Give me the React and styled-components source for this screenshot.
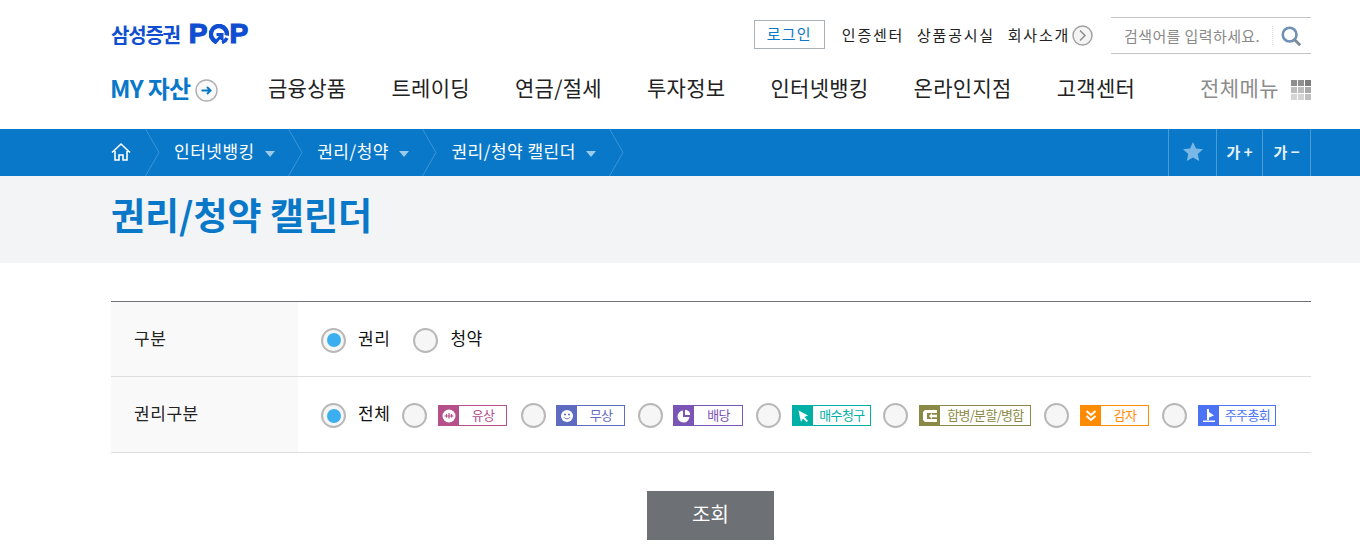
import styled, { createGlobalStyle } from "styled-components";

const GlobalStyle = createGlobalStyle`
  html, body {
    margin: 0;
    padding: 0;
    background: #fff;
    overflow: hidden;
  }
  body, input, button {
    font-family: "Noto Sans CJK KR", "Noto Sans", "Liberation Sans", sans-serif;
  }
  * {
    box-sizing: border-box;
  }
`;

const Page = styled.div`
  width: 1360px;
  height: 557px;
  overflow: hidden;
`;

const Inner = styled.div`
  width: 1200px;
  margin-left: 111px;
`;

const Header = styled.header`
  height: 129px;
`;

const TopRow = styled.div`
  display: flex;
  justify-content: space-between;
  align-items: center;
  height: 71px;
`;

const Logo = styled.a`
  display: flex;
  align-items: center;
  gap: 9px;
  color: #0f4ed1;
  font-weight: 700;
  margin-top: -3px;
`;

const LogoName = styled.span`
  font-size: 20px;
  letter-spacing: -1.2px;
`;

const LogoPop = styled.span`
  display: flex;
  align-items: center;
  gap: 1px;
  font-family: "Liberation Sans", sans-serif;
  font-size: 28px;
  font-weight: 700;
  line-height: 1;
  -webkit-text-stroke: 1.2px #0f4ed1;
`;

const Util = styled.div`
  display: flex;
  align-items: center;
`;

const LoginButton = styled.button`
  width: 71px;
  height: 29px;
  border: 1px solid #a9b0b6;
  background: #fff;
  color: #0a78c8;
  font-size: 15px;
  letter-spacing: 1.2px;
  padding: 0 0 2px;
  margin: -2px 17px 0 0;
`;

const UtilLink = styled.a`
  font-size: 15px;
  color: #222;
  letter-spacing: 1.75px;
  margin: -3px ${(p) => p.$right ?? 13}px 0 0;
  white-space: nowrap;
`;

const MoreIcon = styled.svg`
  margin-top: -1px;
`;

const SearchBox = styled.div`
  display: flex;
  align-items: center;
  width: 200px;
  height: 37px;
  margin-left: 18px;
  border-top: 1px solid #c4c4c4;
  border-bottom: 1px solid #c4c4c4;
  padding-left: 13px;
`;

const SearchText = styled.span`
  font-size: 15px;
  letter-spacing: 0.4px;
  color: #8a8a8a;
  width: 149px;
  white-space: nowrap;
  border-right: 1px dotted #ddd;
  line-height: 19px;
`;

const SearchIcon = styled.svg`
  margin-left: 7px;
`;

const Nav = styled.nav`
  display: flex;
  align-items: center;
  height: 38px;
  margin-top: -3px;
`;

const MyAsset = styled.a`
  display: flex;
  align-items: center;
  width: 157px;
  margin-left: -1px;
  margin-right: 1px;
  color: #0a78c8;
  font-size: 24px;
  font-weight: 700;
  letter-spacing: -0.7px;
  white-space: nowrap;
`;

const MyArrow = styled.svg`
  margin-left: 4px;
  margin-top: 6px;
  flex: none;
`;

const NavList = styled.div`
  display: flex;
  gap: 45px;
  flex: 1;
`;

const NavItem = styled.a`
  font-size: 21px;
  color: #222;
  letter-spacing: 0.3px;
  white-space: nowrap;
`;

const AllMenu = styled.a`
  display: flex;
  align-items: center;
  gap: 12px;
  font-size: 21px;
  color: #8c8c8c;
  letter-spacing: 0.45px;
  white-space: nowrap;
`;

const GridIcon = styled.span`
  display: grid;
  grid-template-columns: repeat(3, 6px);
  grid-auto-rows: 6px;
  gap: 1px;
  margin-top: 5px;
`;

const GridDot = styled.i`
  background: ${(p) => p.$color};
`;

const CrumbBar = styled.div`
  height: 47px;
  background: #0a78c8;
`;

const CrumbInner = styled(Inner)`
  display: flex;
  align-items: center;
  height: 47px;
`;

const Crumbs = styled.div`
  display: flex;
  align-items: center;
  flex: 1;
  height: 47px;
`;

const Crumb = styled.span`
  color: #fff;
  font-size: 17px;
  letter-spacing: 0.5px;
  margin-top: -4px;
  white-space: nowrap;
`;

const Caret = styled.i`
  width: 0;
  height: 0;
  margin: 2px 13px 0 10.5px;
  border-left: 5px solid transparent;
  border-right: 5px solid transparent;
  border-top: 6px solid #9ccbea;
`;

const HomeIcon = styled.svg`
  margin: -2px 14px 0 0;
`;

const Chevron = styled.svg`
  margin-right: 14px;
  flex: none;
`;

const Tools = styled.div`
  display: flex;
  height: 47px;
  border-left: 1px solid #4b9bd7;
`;

const Tool = styled.button`
  display: flex;
  align-items: center;
  justify-content: center;
  width: ${(p) => p.$width}px;
  height: 47px;
  padding: 0 0 2px;
  border: 0;
  border-right: 1px solid #4b9bd7;
  background: transparent;
  color: #e6f2fa;
  font-size: 15px;
  font-weight: 700;
  white-space: nowrap;
`;

const TitleBand = styled.div`
  height: 87px;
  background: #f2f4f6;
`;

const Title = styled.h1`
  margin: 0;
  padding-top: 13px;
  font-size: 37px;
  line-height: 50px;
  font-weight: 700;
  color: #0a78c8;
  letter-spacing: 0;
`;

const FormTable = styled.div`
  margin-top: 38px;
  border-top: 1px solid #6f7277;
`;

const Row = styled.div`
  display: flex;
  height: ${(p) => p.$height}px;
  border-bottom: 1px solid #dedede;
`;

const RowLabel = styled.div`
  display: flex;
  align-items: center;
  width: 187px;
  padding: 0 0 4px 23px;
  background: #f9f9f9;
  font-size: 17px;
  letter-spacing: 0.55px;
  color: #222;
`;

const RowBody = styled.div`
  display: flex;
  align-items: center;
  padding: 1px 0 0 23px;
`;

const Radio = styled.span`
  display: flex;
  align-items: center;
  justify-content: center;
  flex: none;
  width: 25px;
  height: 25px;
  border-radius: 50%;
  border: 2px solid #b8b8b8;
  background: #f6f6f6;
  margin-left: ${(p) => p.$left || 0}px;
  margin-right: ${(p) => p.$right || 0}px;
  margin-top: 1px;
`;

const RadioDot = styled.i`
  width: 14px;
  height: 14px;
  border-radius: 50%;
  background: #3aaeee;
`;

const RadioText = styled.span`
  font-size: 17px;
  letter-spacing: 0.55px;
  color: #111;
  margin-top: -5px;
`;

const Option = styled.span`
  display: contents;
`;

const Badge = styled.span`
  display: flex;
  align-items: stretch;
  width: ${(p) => p.$width}px;
  height: 21px;
  border: 1px solid ${(p) => p.$color};
  color: ${(p) => p.$color};
  margin-top: 1px;
  flex: none;
`;

const BadgeIcon = styled.span`
  display: flex;
  align-items: center;
  justify-content: center;
  flex: none;
  width: 21px;
  margin: -1px 0 -1px -1px;
  background: ${(p) => p.$color};
`;

const BadgeText = styled.span`
  flex: 1;
  text-align: center;
  font-size: 13px;
  line-height: 18px;
  letter-spacing: -0.7px;
  white-space: nowrap;
`;

const ButtonRow = styled.div`
  display: flex;
  justify-content: center;
  margin-top: 38px;
  padding-right: 1px;
`;

const SearchButton = styled.button`
  width: 127px;
  height: 49px;
  border: 0;
  background: #6d7074;
  color: #fff;
  font-size: 20px;
  line-height: 45px;
  padding: 0 0 4px;
`;

const ChevronLine = () => (
  <Chevron width="15" height="47" viewBox="0 0 15 47" fill="none">
    <path d="M0.5 0 L14 23.5 L0.5 47" stroke="#3f94d4" strokeWidth="1" />
  </Chevron>
);

const icons = {
  yusang: (
    <svg width="14" height="14" viewBox="0 0 14 14">
      <circle cx="7" cy="7" r="6.5" fill="#fff" />
      <path d="M2.5 7h9M4.5 5v3.5M7 4v5.5M9.5 5v3.5" stroke="#b5508a" strokeWidth="1.2" />
    </svg>
  ),
  musang: (
    <svg width="14" height="14" viewBox="0 0 14 14">
      <circle cx="7" cy="7" r="6" fill="#fff" />
      <circle cx="5" cy="5.5" r="1" fill="#5f6bc0" />
      <circle cx="9" cy="5.5" r="1" fill="#5f6bc0" />
      <path d="M4 8.3c1.5 2 4.5 2 6 0" stroke="#5f6bc0" strokeWidth="1" fill="none" />
    </svg>
  ),
  baedang: (
    <svg width="14" height="14" viewBox="0 0 14 14" fill="#fff">
      <path d="M6 1.5a6 6 0 1 0 6.5 6.5H6z" />
      <path d="M8 0.8V6h5.2A5.5 5.5 0 0 0 8 0.8z" />
    </svg>
  ),
  maesu: (
    <svg width="14" height="14" viewBox="0 0 14 14" fill="#fff">
      <path d="M2.5 1.5 12 6.5 8.5 8 12 12 10.5 13 7 9.5 5 13z" />
    </svg>
  ),
  merge: (
    <svg width="16" height="14" viewBox="0 0 16 14" fill="#fff">
      <path d="M3 1h12v3H5v6h10v3H3L1 11V3z" />
      <path d="M15 5.8v2.4H10V10L7 7l3-3v1.8z" />
    </svg>
  ),
  gamja: (
    <svg width="14" height="14" viewBox="0 0 14 14" fill="none" stroke="#fff" strokeWidth="2">
      <path d="M2.5 2 7 6l4.5-4M2.5 7 7 11l4.5-4" />
    </svg>
  ),
  meeting: (
    <svg width="14" height="16" viewBox="0 0 14 16" fill="#fff">
      <path d="M5 1h2v3l5 3.5-5 2V12H5z" />
      <path d="M1 12.5h12V14H1z" />
    </svg>
  ),
};

const badges = [
  { label: "유상", color: "#b5508a", width: 69, icon: "yusang", left: 12, right: 11 },
  { label: "무상", color: "#5f6bc0", width: 69, icon: "musang", left: 14, right: 10 },
  { label: "배당", color: "#7a55b5", width: 70, icon: "baedang", left: 13, right: 10 },
  { label: "매수청구", color: "#00b0a6", width: 79, icon: "maesu", left: 13, right: 11 },
  { label: "합병/분할/병합", color: "#8a8a46", width: 112, icon: "merge", left: 12, right: 11 },
  { label: "감자", color: "#ff8c00", width: 69, icon: "gamja", left: 13, right: 11 },
  { label: "주주총회", color: "#4d73f5", width: 78, icon: "meeting", left: 13, right: 11 },
];

const navItems = ["금융상품", "트레이딩", "연금/절세", "투자정보", "인터넷뱅킹", "온라인지점", "고객센터"];
const gridColors = ["#8f8f8f", "#8f8f8f", "#7d7d7d", "#bdbdbd", "#bdbdbd", "#a8a8a8", "#d4d4d4", "#d4d4d4", "#c0c0c0"];

const App = () => {
  return (
    <Page>
      <GlobalStyle />
      <Header>
        <Inner>
          <TopRow>
            <Logo>
              <LogoName>삼성증권</LogoName>
              <LogoPop>
                P
                <svg width="20" height="20" viewBox="0 0 20 20" fill="none">
                  <path d="M7 17.5A8 8 0 1 1 17.8 11.5" stroke="#0f4ed1" strokeWidth="4.5" />
                  <path d="M5.5 19.5 L11.5 12.5 M7.5 10.5 H13 V16" stroke="#0f4ed1" strokeWidth="3" />
                  <path d="M13 18.5 A8 8 0 0 0 18 14" stroke="#0f4ed1" strokeWidth="3.5" />
                </svg>
                P
              </LogoPop>
            </Logo>
            <Util>
              <LoginButton>로그인</LoginButton>
              <UtilLink>인증센터</UtilLink>
              <UtilLink>상품공시실</UtilLink>
              <UtilLink $right={2}>회사소개</UtilLink>
              <MoreIcon width="21" height="21" viewBox="0 0 21 21" fill="none">
                <circle cx="10.5" cy="10.5" r="9.5" stroke="#a3a3a3" strokeWidth="1.5" fill="#f4f4f4" />
                <path d="M8 5.5l5 5-5 5" stroke="#8c8c8c" strokeWidth="1.5" />
              </MoreIcon>
              <SearchBox>
                <SearchText>검색어를 입력하세요.</SearchText>
                <SearchIcon width="22" height="22" viewBox="0 0 24 24" fill="none">
                  <circle cx="10.5" cy="10.5" r="7.5" stroke="#6f90b5" strokeWidth="2.8" />
                  <path d="M16 16l6 6" stroke="#7f8b97" strokeWidth="3.2" />
                </SearchIcon>
              </SearchBox>
            </Util>
          </TopRow>
          <Nav>
            <MyAsset>
              MY 자산
              <MyArrow width="23" height="23" viewBox="0 0 23 23" fill="none">
                <circle cx="11.5" cy="11.5" r="10.5" stroke="#b0b0b0" strokeWidth="1.4" fill="#f8f8f8" />
                <path d="M6.5 11.5h9M12 8l3.5 3.5L12 15" stroke="#0a78c8" strokeWidth="2" />
              </MyArrow>
            </MyAsset>
            <NavList>
              {navItems.map((item) => (
                <NavItem key={item}>{item}</NavItem>
              ))}
            </NavList>
            <AllMenu>
              전체메뉴
              <GridIcon>
                {gridColors.map((c, i) => (
                  <GridDot key={i} $color={c} />
                ))}
              </GridIcon>
            </AllMenu>
          </Nav>
        </Inner>
      </Header>
      <CrumbBar>
        <CrumbInner>
          <Crumbs>
            <HomeIcon width="20" height="20" viewBox="0 0 20 20" fill="none">
              <path d="M1 10.5 10 2l9 8.5M4 9v9h4v-5h4v5h4V9" stroke="#fff" strokeWidth="1.6" />
            </HomeIcon>
            <ChevronLine />
            <Crumb>인터넷뱅킹</Crumb>
            <Caret />
            <ChevronLine />
            <Crumb>권리/청약</Crumb>
            <Caret />
            <ChevronLine />
            <Crumb>권리/청약 캘린더</Crumb>
            <Caret />
            <ChevronLine />
          </Crumbs>
          <Tools>
            <Tool $width={48}>
              <svg width="20" height="19" viewBox="0 0 20 19">
                <path d="M10 0l3 6.5 7 .8-5.2 4.7 1.4 7L10 15.4 3.8 19l1.4-7L0 7.3l7-.8z" fill="#79b8e6" />
              </svg>
            </Tool>
            <Tool $width={46}>가 +</Tool>
            <Tool $width={48}>가 −</Tool>
          </Tools>
        </CrumbInner>
      </CrumbBar>
      <TitleBand>
        <Inner>
          <Title>권리/청약 캘린더</Title>
        </Inner>
      </TitleBand>
      <Inner>
        <FormTable>
          <Row $height={75}>
            <RowLabel>구분</RowLabel>
            <RowBody>
              <Radio $right={12}>
                <RadioDot />
              </Radio>
              <RadioText>권리</RadioText>
              <Radio $left={23} $right={12} />
              <RadioText>청약</RadioText>
            </RowBody>
          </Row>
          <Row $height={76}>
            <RowLabel>권리구분</RowLabel>
            <RowBody>
              <Radio $right={12}>
                <RadioDot />
              </Radio>
              <RadioText>전체</RadioText>
              {badges.map((b) => (
                <Option key={b.label}>
                  <Radio $left={b.left} $right={b.right} />
                  <Badge $color={b.color} $width={b.width}>
                    <BadgeIcon $color={b.color}>{icons[b.icon]}</BadgeIcon>
                    <BadgeText>{b.label}</BadgeText>
                  </Badge>
                </Option>
              ))}
            </RowBody>
          </Row>
        </FormTable>
        <ButtonRow>
          <SearchButton>조회</SearchButton>
        </ButtonRow>
      </Inner>
    </Page>
  );
};

export default App;
